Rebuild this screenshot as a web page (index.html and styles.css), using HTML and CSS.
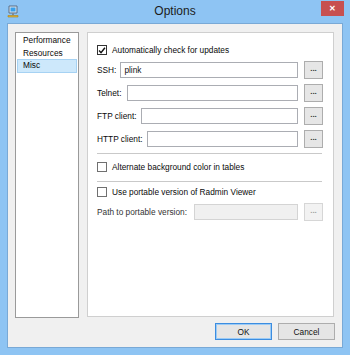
FILE: index.html
```html
<!DOCTYPE html>
<html lang="en">
<head>
    <meta charset="UTF-8">
    <title>Options</title>
    <link rel="stylesheet" href="styles.css">
</head>
<body>
    <div class="window">
        <div class="titlebar">
            <svg class="app-icon" width="12" height="13" viewBox="0 0 12 13">
                <path d="M2 1 L10 1 L10 8 L2 8 Z" fill="#d8e6f2" stroke="#5a6f86" stroke-width="1"/>
                <path d="M3.5 2.5 L8.5 2.5 L8.5 6.5 L3.5 6.5 Z" fill="#3aa0ea"/>
                <path d="M5 8 L7 8 L7 10 L5 10 Z" fill="#7d8a99"/>
                <path d="M1 10.5 L11 10.5 L11 12 L1 12 Z" fill="#e5b630" stroke="#a6801b" stroke-width="0.6"/>
            </svg>
            <div class="title">Options</div>
            <div class="close">&#x2715;</div>
        </div>

        <div class="client">
            <div class="main">
                <!-- Page list -->
                <ul class="pages">
                    <li>Performance</li>
                    <li>Resources</li>
                    <li class="selected">Misc</li>
                </ul>

                <!-- Misc page -->
                <div class="panel">
                    <div class="row check-row first">
                        <span class="check checked">
                            <svg width="9" height="9" viewBox="0 0 9 9"><path d="M1.2 4.6 L3.4 7 L7.8 1.4" fill="none" stroke="#111" stroke-width="1.6"/></svg>
                        </span>
                        <span>Automatically check for updates</span>
                    </div>
                    <div class="row field">
                        <label class="ssh">SSH:</label>
                        <input type="text" value="plink">
                        <button class="browse">...</button>
                    </div>
                    <div class="row field">
                        <label class="telnet">Telnet:</label>
                        <input type="text">
                        <button class="browse">...</button>
                    </div>
                    <div class="row field">
                        <label class="ftp">FTP client:</label>
                        <input type="text">
                        <button class="browse">...</button>
                    </div>
                    <div class="row field">
                        <label class="http">HTTP client:</label>
                        <input type="text">
                        <button class="browse">...</button>
                    </div>
                    <div class="sep sep-one"></div>
                    <div class="row check-row alt">
                        <span class="check"></span>
                        <span>Alternate background color in tables</span>
                    </div>
                    <div class="sep sep-two"></div>
                    <div class="row check-row portable">
                        <span class="check"></span>
                        <span>Use portable version of Radmin Viewer</span>
                    </div>
                    <div class="row field path">
                        <label class="path-label">Path to portable version:</label>
                        <input type="text" disabled>
                        <button class="browse" disabled>...</button>
                    </div>
                </div>
            </div>

            <div class="footer">
                <button class="btn default">OK</button>
                <button class="btn">Cancel</button>
            </div>
        </div>
    </div>
</body>
</html>
```

FILE: styles.css
```css
body {
    margin: 0;
    font-family: "Liberation Sans", Arial, sans-serif;
    font-size: 8.3px;
    color: #0a0a0a;
}
.window {
    width: 350px;
    height: 355px;
    background: #8ec4f3;
    box-sizing: border-box;
    display: flex;
    flex-direction: column;
}
.titlebar {
    height: 23px;
    display: flex;
    align-items: flex-start;
    position: relative;
}
.app-icon {
    margin: 5px 0 0 7px;
}
.title {
    position: absolute;
    left: 0;
    right: 0;
    top: 4px;
    text-align: center;
    font-size: 12px;
    color: #1c1c1c;
}
.close {
    position: absolute;
    left: 321px;
    top: 1px;
    width: 23px;
    height: 15px;
    background: #c75050;
    color: #fff;
    font-size: 8px;
    font-weight: bold;
    text-align: center;
    line-height: 15px;
}
.client {
    margin: 0 7px 0 7px;
    height: 325px;
    box-sizing: border-box;
    background: #f0f0f0;
    border: 1px solid #79a9d6;
    padding: 8px 8px 0 7px;
}
.main {
    display: flex;
    gap: 8px;
    height: 286px;
}
.pages {
    list-style: none;
    margin: 0;
    padding: 2px 1px 0 1px;
    width: 64px;
    box-sizing: border-box;
    background: #fff;
    border: 1px solid #9a9a9a;
}
.pages li {
    height: 11.5px;
    line-height: 11.5px;
    padding-left: 5px;
    border: 1px solid transparent;
    margin-top: -1px;
}
.pages li.selected {
    background: #cde8fb;
    border-color: #a6d2f3;
}
.panel {
    width: 247px;
    height: 285px;
    box-sizing: border-box;
    background: #fff;
    border: 1px solid #cfcfcf;
    padding: 10px 10px 0 9px;
}
.row {
    display: flex;
    align-items: center;
}
.check-row {
    height: 14px;
    gap: 5px;
}
.check {
    width: 10px;
    height: 10px;
    box-sizing: border-box;
    border: 1px solid #707070;
    background: #fff;
    display: flex;
    align-items: center;
    justify-content: center;
}
.check.checked {
    border-color: #333;
}
.field {
    height: 18px;
    margin-top: 5px;
}
.first + .field {
    margin-top: 4px;
}
.field label {
    margin-right: 4px;
}
.field .telnet {
    margin-right: 6px;
}
.field .ftp,
.field .http {
    margin-right: 4px;
}
.field .path-label {
    margin-right: 7px;
    color: #333;
}
.field input {
    flex: 1;
    min-width: 0;
    height: 16px;
    box-sizing: border-box;
    border: 1px solid #abadb3;
    font-family: inherit;
    font-size: 8.3px;
    padding: 0 3px;
    margin: 0 6px 0 0;
    color: #111;
}
.field input:disabled {
    background: #f0f0f0;
    border-color: #d4d4d4;
}
.browse {
    width: 19px;
    height: 18px;
    padding: 0 0 3px 0;
    border: 1px solid #adadad;
    background: #e6e6e6;
    font-family: inherit;
    font-size: 8px;
    font-weight: bold;
    color: #333;
    line-height: 10px;
}
.browse:disabled {
    background: #f2f2f2;
    border-color: #d6d6d6;
    color: #a0a0a0;
}
.sep {
    height: 1px;
    background: #c9c9c9;
    margin-right: 1px;
}
.sep-one {
    margin-top: 5px;
}
.alt {
    margin-top: 6px;
}
.sep-two {
    margin-top: 7px;
}
.portable {
    margin-top: 3px;
}
.path {
    margin-top: 4px;
}
.footer {
    display: flex;
    justify-content: flex-end;
    gap: 6px;
    margin-top: 5px;
    margin-right: -1px;
}
.btn {
    width: 57px;
    height: 17px;
    padding: 0;
    border: 1px solid #adadad;
    background: #e5e5e5;
    font-family: inherit;
    font-size: 8.3px;
    color: #111;
}
.btn.default {
    border-color: #3c8de0;
    box-shadow: inset 0 0 0 1px #9ccbf5;
}
```
